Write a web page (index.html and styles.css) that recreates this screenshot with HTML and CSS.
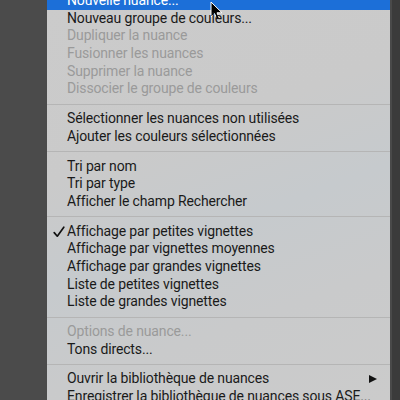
FILE: index.html
```html
<!DOCTYPE html>
<html lang="fr">
<head>
<meta charset="utf-8">
<link rel="stylesheet" href="styles.css">
</head>
<body>
<div class="screen">
  <div class="side-left"></div>
  <div class="menu">
    <ul class="items">
      <li class="item active">Nouvelle nuance...
        <svg class="cursor" width="14" height="20" viewBox="0 0 14 20"><path d="M1 1 L1 16 L4.5 12.5 L7 18.5 L9.5 17.5 L7 11.8 L12 11.8 Z" fill="#000" stroke="#fff" stroke-width="1" stroke-linejoin="round"/></svg>
      </li>
      <li class="item">Nouveau groupe de couleurs...</li>
      <li class="item disabled">Dupliquer la nuance</li>
      <li class="item disabled">Fusionner les nuances</li>
      <li class="item disabled">Supprimer la nuance</li>
      <li class="item disabled">Dissocier le groupe de couleurs</li>
      <li class="sep"></li>
      <li class="item">Sélectionner les nuances non utilisées</li>
      <li class="item">Ajouter les couleurs sélectionnées</li>
      <li class="sep"></li>
      <li class="item">Tri par nom</li>
      <li class="item">Tri par type</li>
      <li class="item">Afficher le champ Rechercher</li>
      <li class="sep"></li>
      <li class="item checked"><svg class="check" width="12" height="12" viewBox="0 0 12 12"><path d="M1.2 6.6 L4.3 10.2 L10.8 1.2" fill="none" stroke="#111" stroke-width="1.7" stroke-linecap="round" stroke-linejoin="round"/></svg>Affichage par petites vignettes</li>
      <li class="item">Affichage par vignettes moyennes</li>
      <li class="item">Affichage par grandes vignettes</li>
      <li class="item">Liste de petites vignettes</li>
      <li class="item">Liste de grandes vignettes</li>
      <li class="sep"></li>
      <li class="item disabled">Options de nuance...</li>
      <li class="item">Tons directs...</li>
      <li class="sep"></li>
      <li class="item submenu">Ouvrir la bibliothèque de nuances<span class="arrow"></span></li>
      <li class="item">Enregistrer la bibliothèque de nuances sous ASE...</li>
    </ul>
  </div>
  <div class="side-right"></div>
</div>
</body>
</html>
```

FILE: styles.css
```css
html, body {
  margin: 0;
  padding: 0;
  width: 400px;
  height: 400px;
  overflow: hidden;
}

.screen {
  display: flex;
  width: 400px;
  height: 400px;
  background: #4b4b4b;
  font-family: Roboto, "Liberation Sans", Arial, sans-serif;
  font-size: 14px;
  letter-spacing: -0.14px;
}

.side-left {
  width: 47px;
  flex: none;
  background: #4b4b4b;
}

.menu {
  width: 343px;
  flex: none;
  overflow: hidden;
  background: linear-gradient(160deg, #cbcbcb 0%, #cacaca 35%, #c6cacd 55%, #c9cacb 75%, #cbcbcb 100%);
}

.side-right {
  flex: 1;
  background: #3b3b3b;
  border-left: 2px solid #4a4a4a;
}

.items {
  list-style: none;
  margin: -8px 0 0 0;
  padding: 0;
}

.item {
  position: relative;
  height: 17.7px;
  line-height: 17.7px;
  padding-left: 20px;
  color: #1a1a1a;
  white-space: nowrap;
}

.item.active {
  background: #1c6fd8;
  color: #fff;
}

.item.disabled {
  color: #9a9a9a;
}

.check {
  position: absolute;
  left: 6px;
  top: 3px;
}

.sep {
  height: 1px;
  background: #b5b5b5;
  margin: 5.5px 0;
}

.arrow {
  position: absolute;
  right: 13px;
  top: 4.5px;
  width: 0;
  height: 0;
  border-top: 4.5px solid transparent;
  border-bottom: 4.5px solid transparent;
  border-left: 8px solid #111;
}

.cursor {
  position: absolute;
  left: 163px;
  top: 9px;
}
```
